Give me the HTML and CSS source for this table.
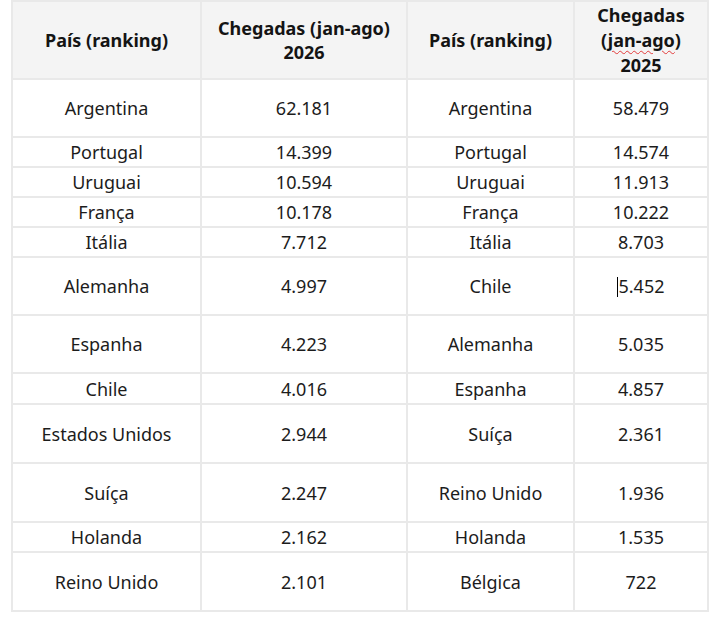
FILE: index.html
```html
<!DOCTYPE html>
<html lang="pt">
<head>
<meta charset="utf-8">
<link rel="stylesheet" href="styles.css">
</head>
<body>
<div class="wrap">
<table class="tbl">
  <colgroup>
    <col class="c1"><col class="c2"><col class="c3"><col class="c4">
  </colgroup>
  <thead>
    <tr class="head">
      <th>País (ranking)</th>
      <th>Chegadas (jan-ago)<br>2026</th>
      <th>País (ranking)</th>
      <th class="narrow">Chegadas (<span class="spell">jan-ago</span>) 2025</th>
    </tr>
  </thead>
  <tbody>
    <tr class="tall"><td>Argentina</td><td>62.181</td><td>Argentina</td><td>58.479</td></tr>
    <tr class="short"><td>Portugal</td><td>14.399</td><td>Portugal</td><td>14.574</td></tr>
    <tr class="short"><td>Uruguai</td><td>10.594</td><td>Uruguai</td><td>11.913</td></tr>
    <tr class="short"><td>França</td><td>10.178</td><td>França</td><td>10.222</td></tr>
    <tr class="short"><td>Itália</td><td>7.712</td><td>Itália</td><td>8.703</td></tr>
    <tr class="tall"><td>Alemanha</td><td>4.997</td><td>Chile</td><td><span class="caret"></span>5.452</td></tr>
    <tr class="tall"><td>Espanha</td><td>4.223</td><td>Alemanha</td><td>5.035</td></tr>
    <tr class="short plus"><td>Chile</td><td>4.016</td><td>Espanha</td><td>4.857</td></tr>
    <tr class="tall plus"><td>Estados Unidos</td><td>2.944</td><td>Suíça</td><td>2.361</td></tr>
    <tr class="tall plus"><td>Suíça</td><td>2.247</td><td>Reino Unido</td><td>1.936</td></tr>
    <tr class="short"><td>Holanda</td><td>2.162</td><td>Holanda</td><td>1.535</td></tr>
    <tr class="tall plus"><td>Reino Unido</td><td>2.101</td><td>Bélgica</td><td>722</td></tr>
  </tbody>
</table>
</div>
</body>
</html>
```
FILE: styles.css
```css
html, body {
  margin: 0;
  padding: 0;
  background: #ffffff;
}
.wrap {
  padding: 0 0 0 11px;
}
.tbl {
  border-collapse: collapse;
  table-layout: fixed;
  width: 696px;
  font-family: "Noto Sans", "Open Sans", sans-serif;
  font-size: 18px;
  color: #1c1c1c;
}
.c1 { width: 189px; }
.c2 { width: 206px; }
.c3 { width: 167px; }
.c4 { width: 134px; }
.tbl th, .tbl td {
  border: 2px solid #e9e9e9;
  text-align: center;
  vertical-align: middle;
  padding: 0 4px;
}
.head th {
  background: #f4f4f4;
  font-weight: 700;
  height: 76px;
  line-height: 24px;
  color: #141414;
}
.head th.narrow {
  padding: 0 18px;
  line-height: 25px;
}
.spell {
  text-decoration: underline wavy #e23b3b;
  text-decoration-thickness: 1px;
  text-underline-offset: 3px;
}
.tall td { height: 56px; }
.short td { height: 28px; }
.tall.plus td { height: 57px; }
.short.plus td { height: 29px; }
.caret {
  display: inline-block;
  width: 1px;
  height: 20px;
  background: #000;
  vertical-align: -4px;
}
```
